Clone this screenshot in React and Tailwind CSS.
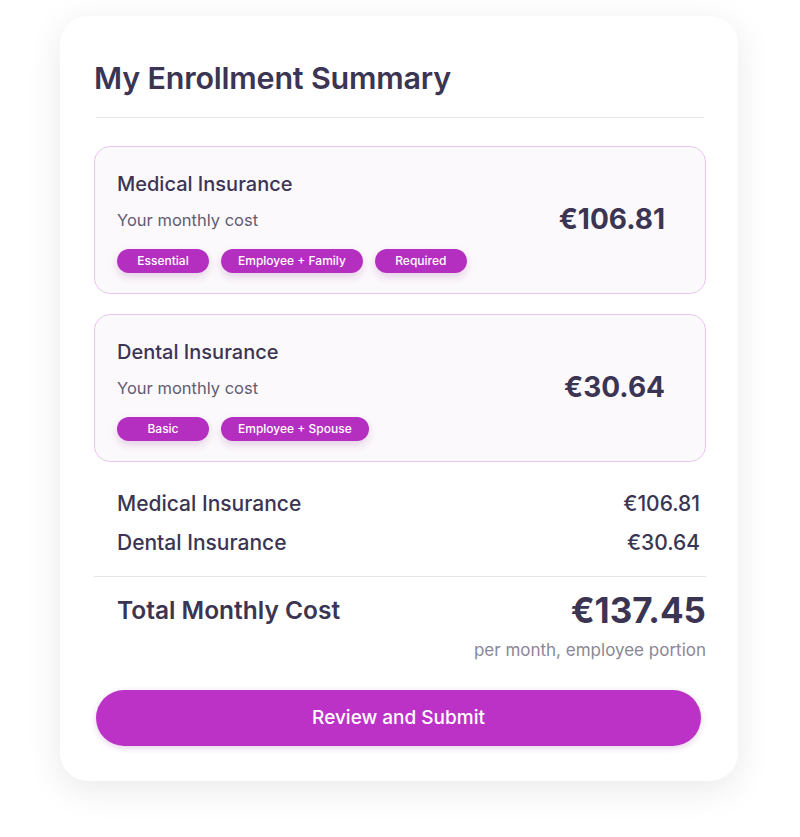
const plans = [
  { name: 'Medical Insurance', price: '€106.81', tags: ['Essential', 'Employee + Family', 'Required'] },
  { name: 'Dental Insurance', price: '€30.64', tags: ['Basic', 'Employee + Spouse'] },
];

const Tag = ({ label }) => (
  <span className="inline-flex items-center justify-center h-[24px] min-w-[92px] px-[17px] rounded-full bg-[#b42fc0] text-white text-[12px] font-medium shadow-[0_4px_8px_rgba(120,30,130,0.18)]">
    {label}
  </span>
);

const App = () => {
  return (
    <div
      className="min-h-[837px] bg-white pt-[16px] pl-[60px]"
      style={{ fontFamily: 'Inter, "Noto Sans", sans-serif' }}
    >
      <div className="w-[678px] bg-white rounded-[28px] shadow-[0_8px_36px_rgba(0,0,0,0.09)] pt-[44px] pb-[35px] pl-[34px] pr-[32px] text-[#3b3553]">
        <h1 className="text-[30.5px] leading-[36px] font-semibold tracking-[-0.2px]">My Enrollment Summary</h1>
        <div className="mt-[21px] h-px bg-[#e5e4e8] mx-[2px]" />

        <div className="mt-[28px] flex flex-col gap-[20px]">
          {plans.map((p) => (
            <div
              key={p.name}
              className="border border-[#e8c6ec] bg-[#fcf9fc] rounded-[16px] pt-[23px] pb-[20px] pl-[22px] pr-[40px] flex items-center justify-between"
            >
              <div>
                <div className="text-[20px] leading-[28px] font-medium">{p.name}</div>
                <div className="mt-[10px] text-[16.5px] leading-[24px] text-[#625c70]">Your monthly cost</div>
                <div className="mt-[17px] flex gap-[12px]">
                  {p.tags.map((t) => (
                    <Tag key={t} label={t} />
                  ))}
                </div>
              </div>
              <div className="mb-[5px] text-[28px] font-bold">{p.price}</div>
            </div>
          ))}
        </div>

        <div className="mt-[28px] pl-[23px] pr-[6px] flex flex-col gap-[11px]">
          {plans.map((p) => (
            <div key={p.name} className="flex justify-between text-[21px] leading-[28px] font-medium">
              <span>{p.name}</span>
              <span>{p.price}</span>
            </div>
          ))}
        </div>

        <div className="mt-[19px] h-px bg-[#e5e4e8]" />

        <div className="mt-[13px] pl-[23px] flex items-center justify-between">
          <span className="text-[24.5px] font-semibold">Total Monthly Cost</span>
          <span className="text-[35px] leading-[40px] font-bold">€137.45</span>
        </div>
        <div className="mt-[9px] text-right text-[17px] leading-[22px] text-[#8a8796]">per month, employee portion</div>

        <button className="mt-[29px] ml-[2px] w-[605px] h-[56px] rounded-full bg-[#bc32c7] text-white text-[19px] font-medium shadow-[0_2px_6px_rgba(120,30,130,0.2)]">
          Review and Submit
        </button>
      </div>
    </div>
  );
};

export default App;
